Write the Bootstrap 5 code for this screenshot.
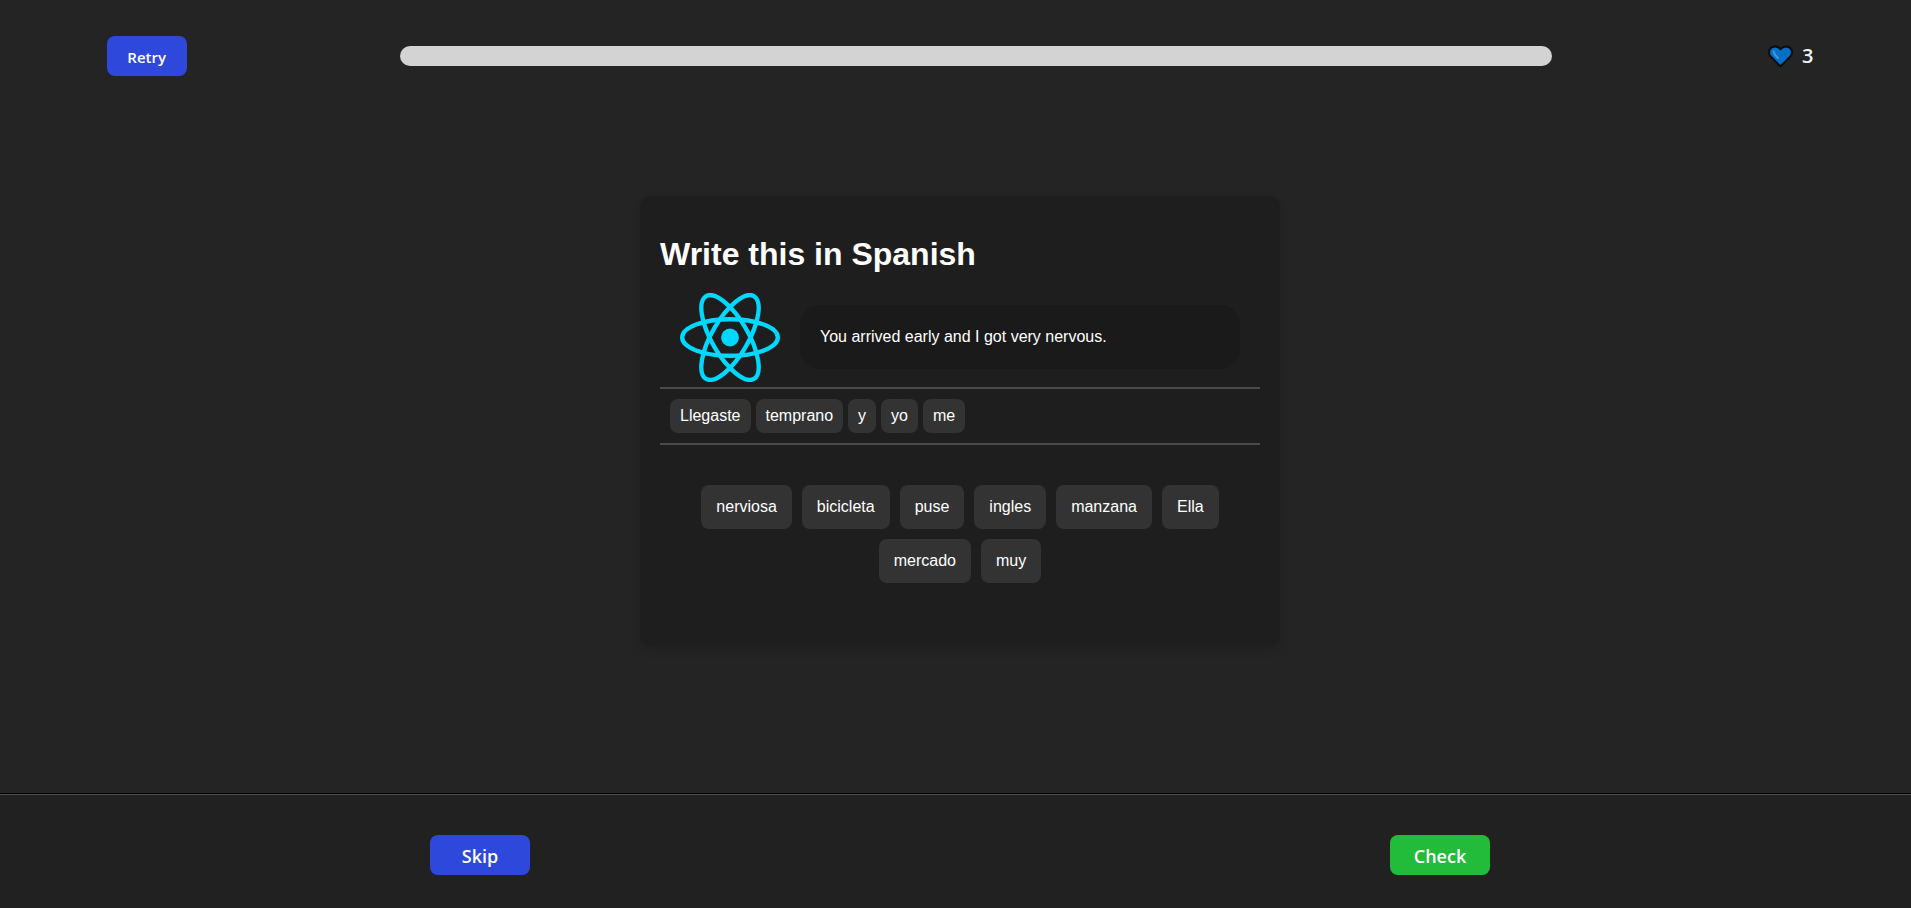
<!DOCTYPE html>
<html lang="en">
<head>
<meta charset="utf-8">
<meta name="viewport" content="width=device-width, initial-scale=1">
<title>Write this in Spanish</title>
<link href="https://cdn.jsdelivr.net/npm/bootstrap@5.3.0/dist/css/bootstrap.min.css" rel="stylesheet">
<style>
html { overflow: hidden; }
body { width: 1920px; height: 908px; overflow: hidden; background: #242424; color: #fff; font-family: "Liberation Sans", Arial, sans-serif; font-size: 16px; }
.ui-font { font-family: "Open Sans", "Noto Sans", sans-serif; font-weight: 600; }
.lesson-top { height: 112px; }
.meter { width: 60%; height: 20px; border-radius: 10px; background: #d3d3d3; }
.hearts { width: 48px; font-size: 20px; color: #f2f2f2; padding-left: 3px; }
.btn-lesson { height: 40px; width: 100px; border: 0; border-radius: 8px; color: #fff; font-size: 18px; line-height: 38px; padding: 2px 0 0; }
.btn-retry { width: 80px; font-size: 15px; }
.blue, .blue:hover { background: #2f48dc; color: #fff; }
.green, .green:hover { background: #22bb3a; color: #fff; }
.exercise { width: 640px; height: 449px; margin-top: 84px; padding: 40px 20px 0; border-radius: 10px; background: #1e1e1e; box-shadow: 0 4px 10px rgba(0,0,0,.17); }
.exercise h1 { font-size: 32px; font-weight: 700; line-height: 37px; margin: 0 0 20px; }
.prompt { height: 89px; padding-left: 20px; gap: 20px; }
.bubble { width: 440px; height: 64px; border-radius: 20px; background: #1a1a1a; padding: 0 20px 1px; margin-bottom: 1px; }
.answer { height: 58px; margin-top: 5px; gap: 5px; padding: 10px; border-top: 2px solid #4a4a4a; border-bottom: 2px solid #4a4a4a; }
.word { background: #333; border-radius: 8px; line-height: 18px; padding: 8px 10px; }
.bank { margin-top: 40px; gap: 10px; padding: 0 20px; }
.bank .word { padding: 13px 15px; }
.lesson-foot { height: 115px; border-top: 1px solid #000; background: #212121; box-shadow: inset 0 1px #4c4f4c; padding-top: 41px; }
</style>
</head>
<body class="d-flex flex-column">
<header class="lesson-top d-flex align-items-center justify-content-around flex-shrink-0">
  <button class="btn btn-lesson btn-retry blue ui-font">Retry</button>
  <div class="meter"></div>
  <div class="hearts ui-font d-flex align-items-center justify-content-between">
    <svg width="25" height="23" viewBox="0 0 25 23"><path d="M12.5 21.4 2.6 11.4C.6 9.4.4 5.6 2.6 3.3 5.2.7 9.8.8 12.5 4.2 15.2.8 19.8.7 22.4 3.3c2.2 2.3 2 6.1 0 8.1Z" fill="#0370c8" stroke="#0b0b0b" stroke-width="2" stroke-linejoin="round"/><path d="M5.7 6.3c-.1 2.6 2 4.6 4.4 6.8" fill="none" stroke="#4596d6" stroke-width="2" stroke-linecap="round"/></svg>
    <span>3</span>
  </div>
</header>
<main class="flex-grow-1">
  <section class="exercise mx-auto">
    <h1>Write this in Spanish</h1>
    <div class="prompt d-flex align-items-center">
      <svg width="100" height="89" viewBox="-11.5 -10.23 23 20.46"><circle r="2.05" fill="#00d8ff"/><g fill="none" stroke="#00d8ff"><ellipse rx="11" ry="4.2"/><ellipse rx="11" ry="4.2" transform="rotate(60)"/><ellipse rx="11" ry="4.2" transform="rotate(120)"/></g></svg>
      <div class="bubble d-flex align-items-center">You arrived early and I got very nervous.</div>
    </div>
    <div class="answer d-flex">
      <span class="word">Llegaste</span><span class="word">temprano</span><span class="word">y</span><span class="word">yo</span><span class="word">me</span>
    </div>
    <div class="bank d-flex flex-wrap justify-content-center">
      <span class="word">nerviosa</span><span class="word">bicicleta</span><span class="word">puse</span><span class="word">ingles</span><span class="word">manzana</span><span class="word">Ella</span><span class="word">mercado</span><span class="word">muy</span>
    </div>
  </section>
</main>
<footer class="lesson-foot d-flex flex-shrink-0">
  <div class="w-50 text-center"><button class="btn btn-lesson blue ui-font">Skip</button></div>
  <div class="w-50 text-center"><button class="btn btn-lesson green ui-font">Check</button></div>
</footer>
<script src="https://cdn.jsdelivr.net/npm/bootstrap@5.3.0/dist/js/bootstrap.bundle.min.js"></script>
</body>
</html>
